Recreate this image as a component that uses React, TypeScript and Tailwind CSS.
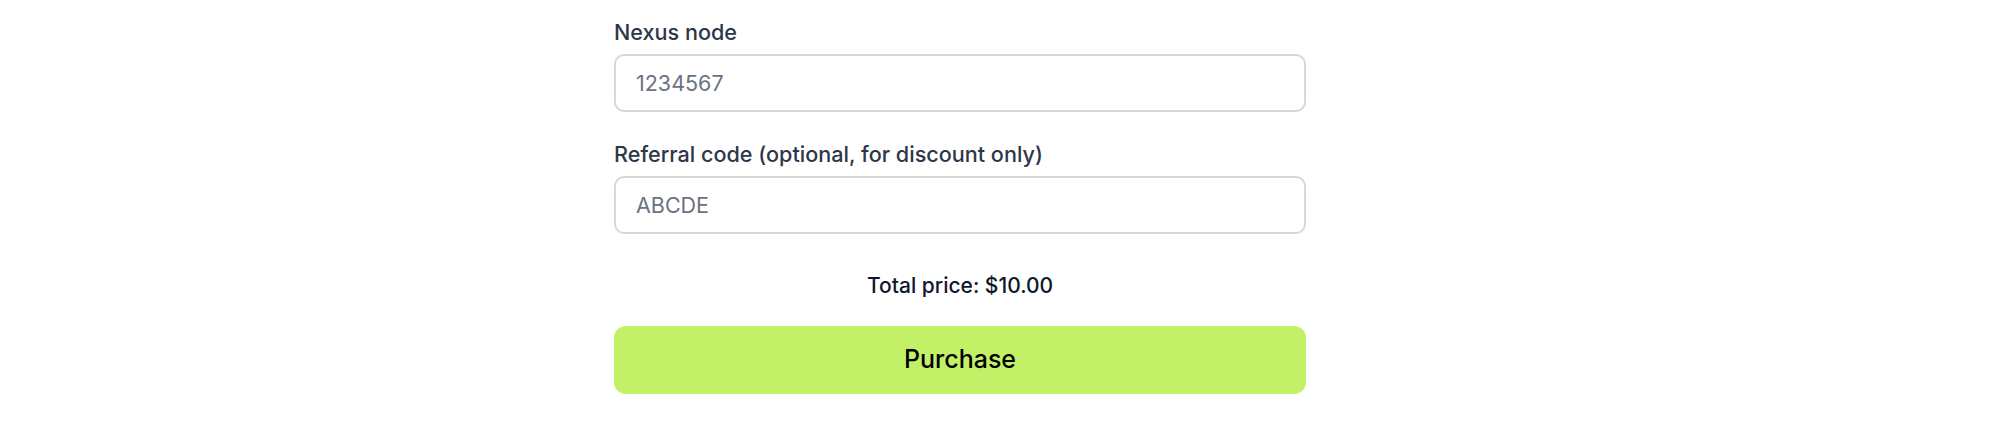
import React, { useState } from 'react';

const font = { fontFamily: 'Inter, "Noto Sans", sans-serif' };

export default function App() {
  const [node, setNode] = useState('');
  const [code, setCode] = useState('');

  return (
    <div className="min-h-[427px] w-full bg-white" style={font}>
      <div className="flex w-[1920px] justify-center">
        <div className="w-[692px] pt-[18px]">
          <label className="mb-2 block text-[21.6px] leading-[28px] font-medium text-[#2d3748]">Nexus node</label>
          <input
            value={node}
            onChange={(e) => setNode(e.target.value)}
            placeholder="1234567"
            className="block h-[58px] w-full rounded-[10px] border-2 border-[#d4d7dc] bg-white px-5 text-[21.5px] text-[#2d3748] placeholder:text-[#6b7280] outline-none"
          />

          <label className="mt-[28px] mb-2 block text-[21.6px] leading-[28px] font-medium text-[#2d3748]">
            Referral code (optional, for discount only)
          </label>
          <input
            value={code}
            onChange={(e) => setCode(e.target.value)}
            placeholder="ABCDE"
            className="block h-[58px] w-full rounded-[10px] border-2 border-[#d4d7dc] bg-white px-5 text-[21.5px] text-[#2d3748] placeholder:text-[#6b7280] outline-none"
          />

          <p className="mt-[38px] text-center text-[21px] leading-[28px] font-medium text-[#0f172a]">Total price: $10.00</p>

          <button className="mt-[26px] flex h-[68px] w-full items-center justify-center rounded-[12px] bg-[#c2f167] text-[25px] font-medium text-black">
            Purchase
          </button>
        </div>
      </div>
    </div>
  );
}
